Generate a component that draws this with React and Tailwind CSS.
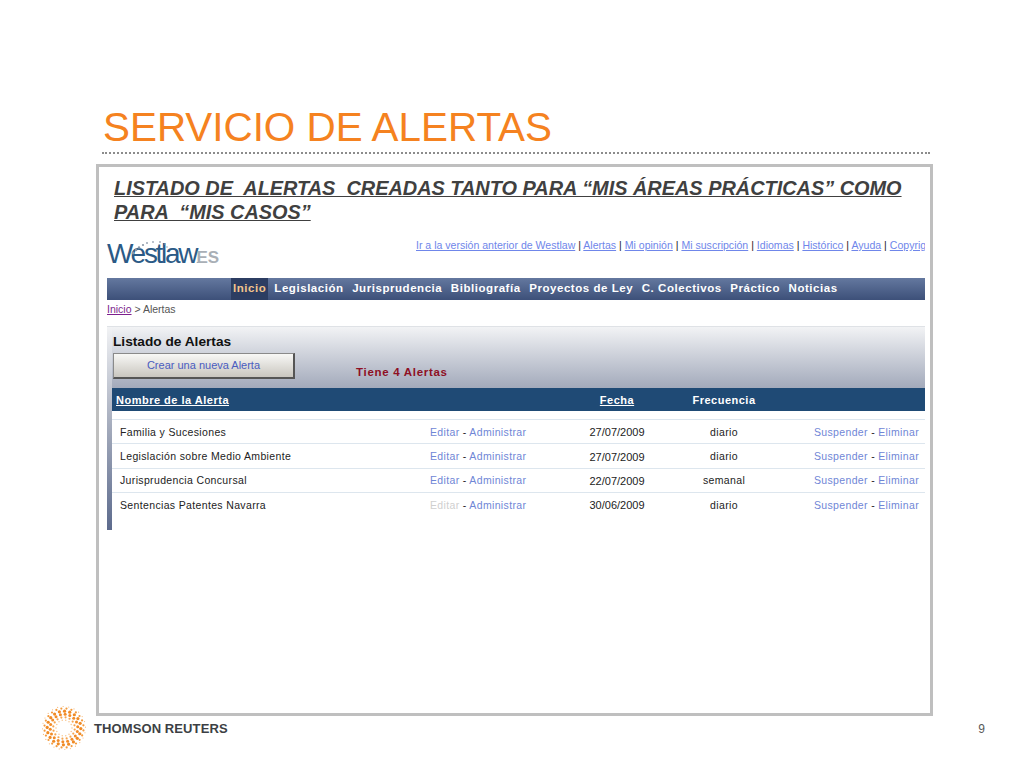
import React from "react";

const topLinks = ["Ir a la versión anterior de Westlaw", "Alertas", "Mi opinión", "Mi suscripción", "Idiomas", "Histórico", "Ayuda", "Copyright"];
const navItems = ["Legislación", "Jurisprudencia", "Bibliografía", "Proyectos de Ley", "C. Colectivos", "Práctico", "Noticias"];
const alerts = [
  { name: "Familia y Sucesiones", date: "27/07/2009", freq: "diario" },
  { name: "Legislación sobre Medio Ambiente", date: "27/07/2009", freq: "diario" },
  { name: "Jurisprudencia Concursal", date: "22/07/2009", freq: "semanal" },
  { name: "Sentencias Patentes Navarra", date: "30/06/2009", freq: "diario", noEdit: true },
];

const rings = [
  { r: 8, n: 14, s: 0.75, c: "#f9c58d" },
  { r: 10.8, n: 16, s: 1.1, c: "#f6a54f" },
  { r: 13.8, n: 18, s: 1.5, c: "#f28c28" },
  { r: 16.8, n: 20, s: 1.6, c: "#f08a24" },
  { r: 19.6, n: 24, s: 1.1, c: "#f39a3c" },
  { r: 21.5, n: 24, s: 0.6, c: "#f8bd80" },
];

const ReutersLogo = () => (
  <svg width="44" height="44" viewBox="-22 -22 44 44">
    {rings.map((ring, i) =>
      Array.from({ length: ring.n }).map((_, j) => {
        const a = ((j + i * 0.37) / ring.n) * Math.PI * 2;
        return <circle key={i + "-" + j} cx={ring.r * Math.cos(a)} cy={ring.r * Math.sin(a)} r={ring.s} fill={ring.c} />;
      })
    )}
  </svg>
);

const arcDots = [
  [2, 15, 1.4], [5, 12, 1.3], [8, 9.5, 1.2], [12, 7, 1.1], [16, 5, 1], [22, 4, 0.9], [29, 4, 0.9], [34, 6, 0.8], [36, 9, 0.8],
];

const WestlawLogo = () => (
  <div className="relative w-[116px] h-[36px]">
    <div className="absolute left-0 bottom-0 flex items-baseline leading-[26px]">
      <span className="text-[28px] tracking-[-2.3px] text-[#2b5a86]">Westlaw</span>
      <span className="text-[8px] text-[#8a96a6] font-bold">.</span>
      <span className="-ml-[2px] text-[17px] font-bold text-[#a9afb6]">ES</span>
    </div>
    <svg width="40" height="18" viewBox="0 0 40 18" className="absolute left-[24px] top-0">
      {arcDots.map(([x, y, r], i) => (
        <circle key={i} cx={x} cy={y} r={r} fill={i < 4 ? "#8a96a6" : "#9aa5b3"} />
      ))}
    </svg>
  </div>
);

export default function App() {
  return (
    <div className="w-[1024px] h-[768px] bg-white overflow-hidden flex flex-col font-['Liberation_Sans',Arial,sans-serif]">
      <h1 className="mt-[104px] ml-[103px] h-[46px] leading-[46px] text-[40.4px] text-[#f58220]">SERVICIO DE ALERTAS</h1>
      <div className="mt-[2px] ml-[102px] w-[828px] border-t-[2px] border-dotted border-[#8c8c8c]" />

      <div className="mt-[10px] ml-[96px] w-[837px] h-[552px] border-[3px] border-[#bfbfbf] flex flex-col">
        <h2 className="mt-[9px] ml-[15px] text-[19.9px] leading-[24px] font-bold italic underline text-[#404040] whitespace-pre">
          {"LISTADO DE  ALERTAS  CREADAS TANTO PARA “MIS ÁREAS PRÁCTICAS” COMO\nPARA  “MIS CASOS”"}
        </h2>

        <div className="mt-[14px] ml-[8px] w-[818px] flex flex-col">
          <div className="h-[40px] flex justify-between">
            <WestlawLogo />
            <div className="w-[509px] overflow-hidden whitespace-nowrap text-[10.55px] leading-[14px] text-[#222]">
              {topLinks.map((l, i) => (
                <span key={l}>
                  {i > 0 && " | "}
                  <span className="underline text-[#6f86ea]">{l}</span>
                </span>
              ))}
            </div>
          </div>

          <nav className="h-[22px] bg-gradient-to-b from-[#64789f] to-[#3d5079] flex items-center pl-[124px] text-[11.5px] font-bold tracking-[0.55px] text-white">
            <span className="bg-[#2c3d62] text-[#f2c48c] h-full px-[2px] flex items-center">Inicio</span>
            <div className="ml-[6px] flex gap-[8.5px]">
              {navItems.map((n) => (
                <span key={n}>{n}</span>
              ))}
            </div>
          </nav>

          <div className="h-[26px] pt-[2px] text-[10.5px] leading-[14px] text-[#555]">
            <span className="underline text-[#7d1f8c]">Inicio</span> &gt; Alertas
          </div>

          <div className="flex border-t border-[#dfe2e6]">
            <div className="w-[5px] h-[203px] bg-gradient-to-b from-[#f2f3f5] via-[#a3aabb] to-[#5d6b8d]" />
            <div className="flex-1 flex flex-col">
              <div className="h-[61px] bg-gradient-to-b from-[#f2f3f5] to-[#a3aabb] flex flex-col pl-[1px]">
                <div className="mt-[7px] text-[13.7px] leading-[16px] font-bold text-[#111]">Listado de Alertas</div>
                <div className="mt-[3px] flex">
                  <div className="w-[182px] h-[26px] bg-gradient-to-b from-[#f8f8f6] to-[#c9c6bf] border border-[#8a8a8a] border-b-[2px] border-r-[2px] border-b-[#555] border-r-[#555] text-center text-[11px] leading-[23px] text-[#4a5cc0]">
                    Crear una nueva Alerta
                  </div>
                  <div className="ml-[61px] mt-[11px] text-[11.5px] leading-[16px] font-bold tracking-[0.7px] text-[#8e1024]">Tiene 4 Alertas</div>
                </div>
              </div>

              <div className="h-[23px] pt-px bg-[#1f4a75] grid grid-cols-[318px_128px_118px_96px_1fr] items-center text-[11px] font-bold tracking-[0.5px] text-white">
                <span className="pl-[4px] underline">Nombre de la Alerta</span>
                <span />
                <span className="text-center underline">Fecha</span>
                <span className="text-center">Frecuencia</span>
                <span />
              </div>

              <div className="mt-[8px]">
                {alerts.map((a) => (
                  <div
                    key={a.name}
                    className="h-[24.3px] pt-[2px] border-t-[1.5px] border-[#dde6ee] grid grid-cols-[318px_128px_118px_96px_1fr] items-center text-[10.5px] tracking-[0.35px] text-[#222]"
                  >
                    <span className="pl-[8px]">{a.name}</span>
                    <span>
                      <span className={a.noEdit ? "text-[#cfcfcf]" : "text-[#6f86d6]"}>Editar</span> - <span className="text-[#6f86d6]">Administrar</span>
                    </span>
                    <span className="text-center tracking-normal text-[11px]">{a.date}</span>
                    <span className="text-center">{a.freq}</span>
                    <span className="text-right pr-[6px]">
                      <span className="text-[#6f86d6]">Suspender</span> - <span className="text-[#6f86d6]">Eliminar</span>
                    </span>
                  </div>
                ))}
              </div>
            </div>
          </div>
        </div>
      </div>

      <footer className="-mt-[9px] ml-[42px] w-[943px] h-[42px] flex items-center">
        <ReutersLogo />
        <span className="ml-[8px] mt-[1px] text-[13px] font-bold tracking-[0.1px] text-[#3c3f44]">THOMSON REUTERS</span>
        <span className="ml-auto mt-[1px] text-[12px] text-[#595959]">9</span>
      </footer>
    </div>
  );
}
